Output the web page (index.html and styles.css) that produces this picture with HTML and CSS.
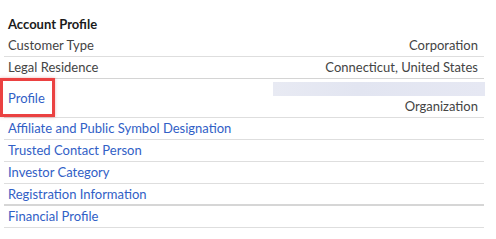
FILE: index.html
```html
<!DOCTYPE html>
<html lang="en">
<head>
    <meta charset="UTF-8">
    <meta name="viewport" content="width=device-width, initial-scale=1.0">
    <title>Account Profile</title>
    <link rel="stylesheet" href="styles.css">
</head>
<body>
    <div class="profile">
        <h3 class="profile-title">Account Profile</h3>

        <div class="row">
            <span class="label">Customer Type</span>
            <span class="value">Corporation</span>
        </div>
        <div class="row">
            <span class="label">Legal Residence</span>
            <span class="value">Connecticut, United States</span>
        </div>
        <div class="row row-tall">
            <a class="link highlighted" href="#">Profile</a>
            <div class="value-stack">
                <div class="redacted"></div>
                <span class="value">Organization</span>
            </div>
        </div>
        <div class="row"><a class="link" href="#">Affiliate and Public Symbol Designation</a></div>
        <div class="row"><a class="link" href="#">Trusted Contact Person</a></div>
        <div class="row"><a class="link" href="#">Investor Category</a></div>
        <div class="row row-thick"><a class="link" href="#">Registration Information</a></div>
        <div class="row"><a class="link" href="#">Financial Profile</a></div>
    </div>
</body>
</html>
```

FILE: styles.css
```css
:root {
    --text-color: #444;
    --link-color: #3160c6;
    --line-color: #dedede;
}

body {
    margin: 0;
    padding: 13px 0 0 4px;
    font-family: Lato, 'Open Sans', sans-serif;
    font-size: 13px;
    color: var(--text-color);
    background: #fff;
}

.profile {
    width: 480px;
}

.profile-title {
    margin: 0;
    padding: 0 4px;
    font-size: 13px;
    font-weight: bold;
    line-height: 22px;
    color: #1b1b1b;
}

.row {
    display: flex;
    justify-content: space-between;
    align-items: center;
    padding: 0 6px 0 4px;
    line-height: 21px;
    border-bottom: 1px solid var(--line-color);
}

.row:nth-of-type(2) {
    border-bottom-color: #d4d4d4;
}

.row-tall {
    position: relative;
    height: 38px;
}

.row-thick {
    border-bottom: 2px solid #d6d6d6;
    line-height: 20px;
}

.link {
    color: var(--link-color);
    text-decoration: none;
}

/* red annotation box round the Profile link */
.highlighted::after {
    content: "";
    position: absolute;
    left: -4px;
    top: -1px;
    width: 49px;
    height: 33px;
    border: 3px solid #eb4141;
    box-shadow: 0 0 3px rgba(200, 40, 40, 0.35);
}

.value-stack {
    display: flex;
    flex-direction: column;
    align-items: flex-end;
}

.redacted {
    width: 212px;
    height: 14px;
    margin-right: -7px;
    margin-top: 2px;
    background: linear-gradient(90deg, #e8eaf3, #e2e5f1 40%, #e6e8f3);
    filter: blur(0.6px);
}
```
